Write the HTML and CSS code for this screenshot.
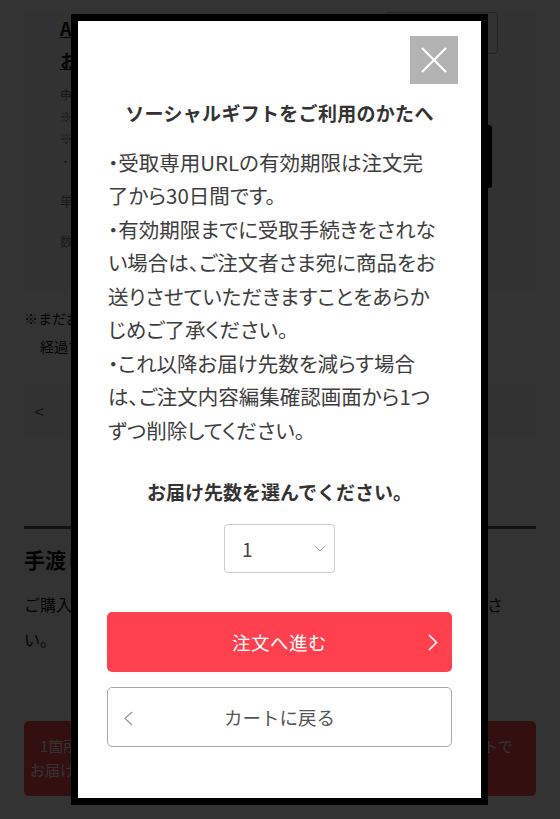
FILE: index.html
```html
<!DOCTYPE html>
<html lang="ja">
<head>
<meta charset="utf-8">
<title>ソーシャルギフト</title>
<link rel="stylesheet" href="styles.css">
</head>
<body>
<div class="page">
  <div class="item">
    <div class="info">
      <a class="name">ABCギフトセット</a>
      <a class="name">おすすめ詰め合わせ</a>
      <p class="meta">申込番号：1234567</p>
      <p class="meta">※のし・包装不可</p>
      <p class="meta">※冷蔵でのお届けです</p>
      <p class="meta small">・経過日数によりお届けできない場合があります</p>
      <p class="meta row">単価：3,000円</p>
      <p class="meta row">数量：1</p>
    </div>
    <div class="side">
      <span class="edit">変更する</span>
      <span class="black-btn"></span>
    </div>
  </div>
  <p class="notice">※まだお届け先が確定していません。ご注文から一定期間が<br>経過すると自動でキャンセルされます。</p>
  <div class="pager"><span class="lt">&lt;</span></div>
  <div class="hand">
    <h2>手渡しでのお届け</h2>
    <p>ご購入者さまのご住所へまとめてお届けしますので、ご確認ください。</p>
  </div>
  <div class="red-box"><span class="l1">1箇所にまとめてお届けする場合は、一度こちらのボタンからカートで</span><br>お届け先を選択してからご購入ください</div>
</div>

<div class="overlay"></div>

<div class="modal">
  <button class="close" aria-label="閉じる">
    <svg width="26" height="26" viewBox="0 0 26 26"><path d="M1 1 L25 25 M25 1 L1 25" stroke="#fff" stroke-width="2" fill="none"/></svg>
  </button>
  <h1 class="title">ソーシャルギフトをご利用のかたへ</h1>
  <p class="desc">・受取専用URLの有効期限は注文完了から30日間です。<br>・有効期限までに受取手続きをされない場合は、ご注文者さま宛に商品をお送りさせていただきますことをあらかじめご了承ください。<br>・これ以降お届け先数を減らす場合は、ご注文内容編集確認画面から1つずつ削除してください。</p>
  <h2 class="sub">お届け先数を選んでください。</h2>
  <div class="select">
    <span class="val">1</span>
    <svg width="12" height="7" viewBox="0 0 12 7"><path d="M0.5 0.5 L6 6 L11.5 0.5" stroke="#9a9a9a" stroke-width="1" fill="none"/></svg>
  </div>
  <button class="btn primary">注文へ進む
    <svg class="arr-r" width="10" height="17" viewBox="0 0 10 17"><path d="M1 1 L8.5 8.5 L1 16" stroke="#fff" stroke-width="1.6" fill="none"/></svg>
  </button>
  <button class="btn ghost">
    <svg class="arr-l" width="10" height="15" viewBox="0 0 10 15"><path d="M9 1 L2 7.5 L9 14" stroke="#9a9a9a" stroke-width="1.3" fill="none"/></svg>
    カートに戻る</button>
</div>
</body>
</html>
```
FILE: styles.css
```css
* { box-sizing: border-box; }
html, body { margin: 0; padding: 0; }
body {
  width: 560px;
  height: 819px;
  overflow: hidden;
  font-family: "Noto Sans CJK JP", "Noto Sans", sans-serif;
  background: #fff;
  color: #111;
  position: relative;
}

/* background page */
.page { padding: 12px 24px 0 24px; }
.item {
  display: flex;
  background: #fafafa;
  padding: 0 38px 20px 36px;
  min-height: 278px;
}
.info { flex: 1; display: flex; flex-direction: column; }
.name {
  font-size: 18px;
  font-weight: 700;
  line-height: 32px;
  text-decoration: underline;
  color: #111;
  white-space: nowrap;
}
.meta { margin: 0; font-size: 12px; line-height: 22px; color: #777; white-space: nowrap; }
.meta:first-of-type { margin-top: 8px; }
.small { font-size: 11px; }
.row { font-size: 13px; margin-top: 18px; color: #888; }
.side { width: 114px; display: flex; flex-direction: column; align-items: flex-end; }
.edit {
  width: 114px; height: 42px; border: 1px solid #aaa; border-radius: 4px;
  font-size: 14px; display: flex; align-items: center; justify-content: center; color: #777;
}
.black-btn { width: 60px; height: 63px; background: #000; margin: 71px 6px 0 0; border-radius: 3px; }
.notice { margin: 14px 0 0; font-size: 14px; line-height: 28px; color: #111; text-indent: -16px; padding-left: 16px; }
.pager {
  margin-top: 24px; height: 54px; background: #f8f8f8; display: flex; align-items: center;
  padding-left: 10px; font-size: 18px; color: #666;
}
.hand { margin-top: 88px; border-top: 3px solid #555; padding-top: 14px; }
.hand h2 { margin: 0; font-size: 21px; line-height: 32px; color: #111; }
.hand p { margin: 12px 0 0; width: 490px; font-size: 16px; line-height: 35px; color: #111; }
.red-box {
  margin-top: 64px; height: 75px; background: #ff4a52; border-radius: 5px;
  color: #fff; font-size: 15px; line-height: 24px; padding: 13px 4px 0 6px;
  white-space: nowrap;
}
.l1 { padding-left: 10px; }

.overlay { position: fixed; inset: 0; background: rgba(0,0,0,0.8); }

/* modal */
.modal {
  position: absolute;
  left: 71px; top: 14px;
  width: 417px; height: 791px;
  border: 7px solid #000;
  background: #fff;
  padding: 78px 29px 0 29px;
  display: flex;
  flex-direction: column;
  align-items: stretch;
}
.close {
  position: absolute; top: 15px; right: 23px;
  width: 48px; height: 48px; border: 0; padding: 0;
  background: #b3b3b3; display: flex; align-items: center; justify-content: center;
}
.title {
  margin: 0; text-align: center;
  font-size: 19px; line-height: 28.5px; font-weight: 700; color: #333;
  letter-spacing: 0.3px;
}
.desc {
  margin: 18px 0 0 1px; width: 331px;
  font-size: 20.5px; line-height: 33.5px; color: #3e3e3e;
  font-feature-settings: "palt";
}
.sub {
  margin: 31px 0 0; text-align: center;
  font-size: 19px; line-height: 28px; font-weight: 700; color: #333;
}
.select {
  align-self: center;
  margin-top: 18px; width: 111px; height: 49px;
  border: 1px solid #ccc; border-radius: 4px;
  display: flex; align-items: center; justify-content: space-between;
  padding: 0 8px 0 17px; font-size: 19px; color: #444;
}
.btn {
  position: relative;
  height: 60px; width: 100%;
  border-radius: 5px; font-family: inherit; font-size: 18.5px;
  display: flex; align-items: center; justify-content: center;
  padding: 0;
}
.primary { margin-top: 39px; background: #ff404f; border: 0; color: #fff; letter-spacing: 0.5px; }
.ghost { margin-top: 15px; background: #fff; border: 1px solid #aaa; color: #555; }
.arr-r { position: absolute; right: 14px; top: 22px; }
.arr-l { position: absolute; left: 15px; top: 23px; }
```
